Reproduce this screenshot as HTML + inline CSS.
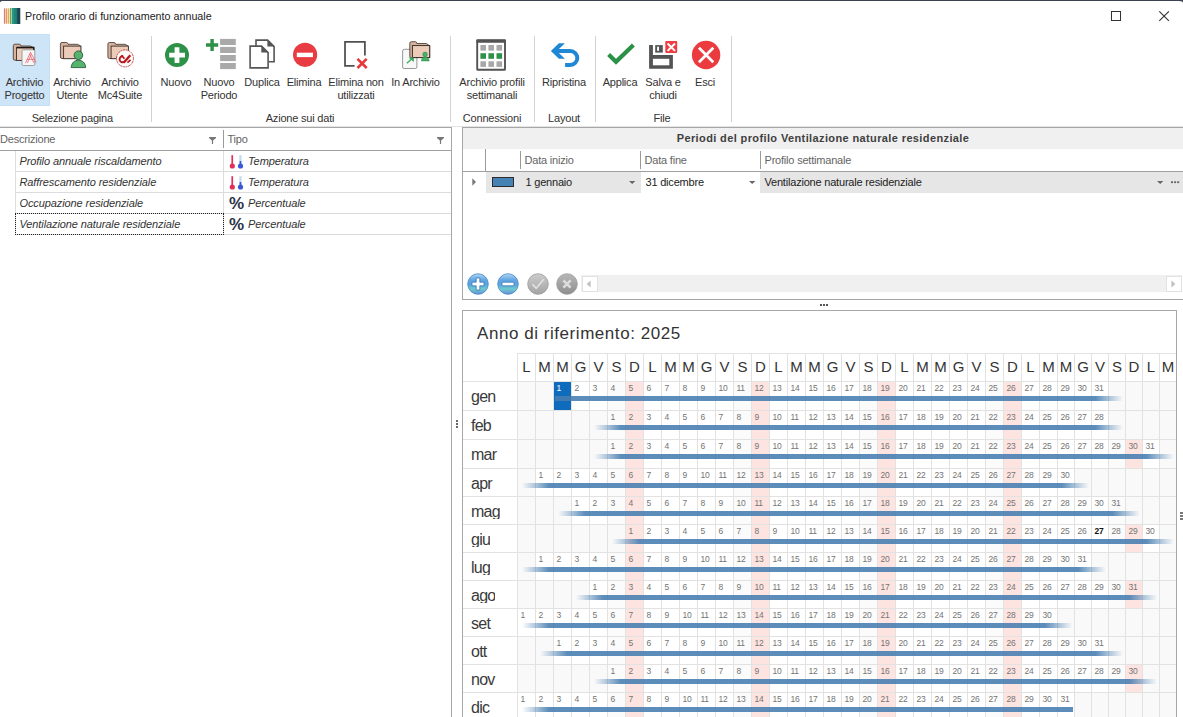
<!DOCTYPE html><html><head><meta charset="utf-8"><title>Profilo orario di funzionamento annuale</title><style>
html,body{margin:0;padding:0;}
body{width:1183px;height:717px;overflow:hidden;background:#fff;position:relative;
 font-family:"Liberation Sans",sans-serif;font-size:11px;letter-spacing:-0.2px;color:#333;}
.a{position:absolute;}
.t{position:absolute;white-space:nowrap;line-height:13px;}
.c{position:absolute;white-space:nowrap;line-height:13px;text-align:center;}
.hl{position:absolute;height:1px;}
.vl{position:absolute;width:1px;}
.it{font-style:italic;letter-spacing:-0.1px;}
.hd{color:#646464;}
.d{position:absolute;font-size:8.5px;line-height:8px;letter-spacing:-0.35px;color:#747474;white-space:nowrap;}
.m{position:absolute;font-size:16px;line-height:18px;letter-spacing:-0.75px;color:#3a3a3a;white-space:nowrap;left:471px;}
.w{position:absolute;font-size:15px;line-height:16px;letter-spacing:0;color:#333;text-align:center;top:358.5px;}
</style></head><body>
<div class="a" style="left:0;top:0;width:1183px;height:1px;background:#3c4250"></div>
<svg class="a" style="left:1179px;top:0" width="4" height="4" viewBox="0 0 4 4"><path d="M0 0H4V3.2C4 1.8 2.8 1 0 1Z" fill="#3c4250"/></svg><svg class="a" style="left:0;top:0" width="3" height="3" viewBox="0 0 3 3"><path d="M0 0H3V1C1.6 1 0.6 1.4 0 2.4Z" fill="#3c4250"/></svg>
<svg class="a" style="left:0;top:0" width="30" height="30" viewBox="0 0 30 30"><rect x="12.2" y="8" width="7.8" height="16" fill="#1f7a74"/><rect x="3.9" y="8.4" width="1.4" height="15.3" fill="#e07a62"/><rect x="5.9" y="8.4" width="1.4" height="15.3" fill="#e8955c"/><rect x="7.9" y="8.4" width="1.4" height="15.3" fill="#dcb250"/><rect x="9.9" y="8" width="1.2" height="16" fill="#6ea462"/><rect x="11.2" y="8" width="0.8" height="16" fill="#a4c487"/><rect x="12.2" y="8" width="2.3" height="16" fill="#229a84"/><rect x="14.2" y="8" width="2.1" height="16" fill="#1f8478"/><rect x="16" y="8" width="1.5" height="16" fill="#217a74"/><rect x="17.2" y="8" width="3.0999999999999996" height="16" fill="#1f4652"/></svg>
<div class="t" style="left:24.6px;top:9.6px;color:#222;font-size:11.5px;letter-spacing:0;transform:scaleX(0.933);transform-origin:0 0">Profilo orario di funzionamento annuale</div>
<svg class="a" style="left:1100px;top:0" width="83" height="32" viewBox="1100 0 83 32"><rect x="1111.5" y="11.5" width="9" height="9" fill="none" stroke="#333" stroke-width="1"/><path d="M1159.3 11.3L1168.9 20.9M1168.9 11.3L1159.3 20.9" stroke="#333" stroke-width="1.1" fill="none"/></svg>
<div class="a" style="left:-1px;top:34px;width:49px;height:70px;background:#cee4f7;border:1px solid #c5e0f4"></div>
<div class="vl" style="left:151px;top:36px;height:86px;background:#d2d2d2"></div>
<div class="vl" style="left:450px;top:36px;height:86px;background:#d2d2d2"></div>
<div class="vl" style="left:534px;top:36px;height:86px;background:#d2d2d2"></div>
<div class="vl" style="left:595px;top:36px;height:86px;background:#d2d2d2"></div>
<div class="vl" style="left:731px;top:36px;height:86px;background:#d2d2d2"></div>
<div class="c" style="left:-25.5px;width:100px;top:76px">Archivio</div>
<div class="c" style="left:-25.5px;width:100px;top:89px">Progetto</div>
<div class="c" style="left:22px;width:100px;top:76px">Archivio</div>
<div class="c" style="left:22px;width:100px;top:89px">Utente</div>
<div class="c" style="left:70px;width:100px;top:76px">Archivio</div>
<div class="c" style="left:70px;width:100px;top:89px">Mc4Suite</div>
<div class="c" style="left:126px;width:100px;top:76px">Nuovo</div>
<div class="c" style="left:169px;width:100px;top:76px">Nuovo</div>
<div class="c" style="left:169px;width:100px;top:89px">Periodo</div>
<div class="c" style="left:212px;width:100px;top:76px">Duplica</div>
<div class="c" style="left:254px;width:100px;top:76px">Elimina</div>
<div class="c" style="left:306px;width:100px;top:76px">Elimina non</div>
<div class="c" style="left:306px;width:100px;top:89px">utilizzati</div>
<div class="c" style="left:365.5px;width:100px;top:76px">In Archivio</div>
<div class="c" style="left:442px;width:100px;top:76px">Archivio profili</div>
<div class="c" style="left:442px;width:100px;top:89px">settimanali</div>
<div class="c" style="left:514px;width:100px;top:76px">Ripristina</div>
<div class="c" style="left:570px;width:100px;top:76px">Applica</div>
<div class="c" style="left:613px;width:100px;top:76px">Salva e</div>
<div class="c" style="left:613px;width:100px;top:89px">chiudi</div>
<div class="c" style="left:655px;width:100px;top:76px">Esci</div>
<div class="c" style="left:12.299999999999997px;width:120px;top:112px">Selezione pagina</div>
<div class="c" style="left:240px;width:120px;top:112px">Azione sui dati</div>
<div class="c" style="left:432px;width:120px;top:112px">Connessioni</div>
<div class="c" style="left:504px;width:120px;top:112px">Layout</div>
<div class="c" style="left:602px;width:120px;top:112px">File</div>
<svg class="a" style="left:0;top:32px" width="760" height="95" viewBox="0 32 760 95"><path d="M13.3 45.800000000000004Q13.3 44.2 14.9 44.2H19.3Q20.700000000000003 44.2 21.1 46.0H30.5L33.6 47.800000000000004V60.2H14.9Q13.3 60.2 13.3 58.800000000000004Z" fill="#d7b29c" stroke="#3a302c" stroke-width="0.8"/><rect x="16.5" y="47.800000000000004" width="17.3" height="12.6" fill="#ecccb8" stroke="#3a302c" stroke-width="0.9"/><rect x="22" y="49.8" width="12.8" height="15.7" rx="1.3" fill="#f6f6f6" stroke="#8a8a8a" stroke-width="0.8"/><path d="M30.5 52.4L25.6 62.8M30.5 52.4L36 62.2M31.2 54.4L27.6 62.6M29.8 54.4L33.8 62.6M27.2 59.4H33.8" stroke="#ec5a6a" stroke-width="0.75" fill="none" stroke-linecap="round"/><path d="M16.5 47.5H33.8V50" stroke="#1c1614" stroke-width="1.3" fill="none"/><path d="M60.4 44.1Q60.4 42.5 62.0 42.5H66.4Q67.8 42.5 68.2 44.3H77.6L80.7 46.1V58.5H62.0Q60.4 58.5 60.4 57.1Z" fill="#d7b29c" stroke="#3a302c" stroke-width="0.8"/><rect x="63.6" y="46.1" width="17.3" height="12.6" fill="#ecccb8" stroke="#3a302c" stroke-width="0.9"/><path d="M71.2 67.6C71.6 62.5 74.5 60.3 78.4 60.3C82.3 60.3 85.3 62.5 85.7 67.6Z" fill="#55b36e" stroke="#1f4d2e" stroke-width="0.8"/><circle cx="78.4" cy="55.2" r="4.3" fill="#55b36e" stroke="#1f4d2e" stroke-width="0.8"/><path d="M107.9 44.1Q107.9 42.5 109.5 42.5H113.9Q115.30000000000001 42.5 115.7 44.3H125.10000000000001L128.20000000000002 46.1V58.5H109.5Q107.9 58.5 107.9 57.1Z" fill="#d7b29c" stroke="#3a302c" stroke-width="0.8"/><rect x="111.10000000000001" y="46.1" width="17.3" height="12.6" fill="#ecccb8" stroke="#3a302c" stroke-width="0.9"/><circle cx="125" cy="58.4" r="8.5" fill="#fbfbfb" stroke="#b22a2a" stroke-width="0.8" stroke-dasharray="2 0.7"/><path d="M123.1 56.3A3 3 0 1 0 124.2 61.8" fill="none" stroke="#b8161a" stroke-width="1.9"/><path d="M123.6 62.8L130.3 55.3" fill="none" stroke="#b8161a" stroke-width="2.3"/><path d="M121.6 55.2L124.4 58.8" fill="none" stroke="#b8161a" stroke-width="1.7"/><path d="M127.4 62.6L130.6 59.8" fill="none" stroke="#b8161a" stroke-width="1.7"/><circle cx="177" cy="55.1" r="12" fill="#2e9148"/><path d="M174.6 47.2H179.4V52.7H185V57.5H179.4V63H174.6V57.5H169.2V52.7H174.6Z" fill="#fff"/><path d="M210.4 39H213.8V43.3H218.2V46.7H213.8V51H210.4V46.7H206V43.3H210.4Z" fill="#2e9148"/><rect x="220.1" y="38.9" width="15.7" height="6.1" fill="#a9a9a9"/><rect x="220.1" y="46.9" width="15.7" height="6.1" fill="#a9a9a9"/><rect x="220.1" y="55.0" width="15.7" height="6.1" fill="#a9a9a9"/><rect x="220.1" y="63.0" width="15.7" height="6.1" fill="#a9a9a9"/><path d="M256 46V40.1H267.6L274.1 46.6V61.8H268.9" fill="#fff" stroke="#555" stroke-width="1.6"/><path d="M267.4 39.8V46.5H274.4Z" fill="#555"/><path d="M250.1 46.1H261.5L268.1 52.7V67.9H250.1Z" fill="#fff" stroke="#555" stroke-width="1.6"/><path d="M261.3 45.8V52.6H268.4Z" fill="#555"/><circle cx="305.1" cy="54.8" r="12.1" fill="#e83c42"/><rect x="296.8" y="52.7" width="16.2" height="4.4" fill="#fff"/><path d="M354.6 65.8H345V41.9H364.9V55.4" fill="none" stroke="#505050" stroke-width="1.75"/><path d="M357.5 58.8L366.7 68M366.7 58.8L357.5 68" stroke="#e8363a" stroke-width="2.6" fill="none"/><path d="M402.6 51Q402.6 49.3 404.3 49.3H415.4Q416.9 49.3 416.9 50.8V67Q416.9 68.5 415.4 68.5H404.1Q402.6 68.5 402.6 67Z" fill="#f8f8f8" stroke="#8c8c8c" stroke-width="0.9"/><path d="M409.8 43.4Q409.8 41.7 411.4 41.7H415.4Q416.6 41.7 416.9 43.5H426.2L429.7 45.8V57.6H411.4Q409.8 57.6 409.8 56.2Z" fill="#d7b29c" stroke="#3a302c" stroke-width="0.8"/><rect x="412.4" y="45.6" width="17.3" height="12" fill="#ecccb8" stroke="#2a2320" stroke-width="0.9"/><circle cx="425.05" cy="54.4" r="2.3" fill="#45b468" stroke="#2f7a45" stroke-width="0.5"/><path d="M421.4 60.9C421.6 58 423 56.9 425.05 56.9C427.1 56.9 428.9 58 429.2 60.9Z" fill="#45b468" stroke="#2f7a45" stroke-width="0.5"/><path d="M406.8 63.2L412.4 58.4" stroke="#45b468" stroke-width="1.5" fill="none"/><path d="M408.4 57.4H413.9V62L408.4 57.4Z" fill="#3fa75f"/><rect x="477.2" y="40.6" width="27.8" height="29.2" rx="0.6" fill="#fff" stroke="#535353" stroke-width="1.9"/><rect x="476.3" y="39.2" width="29.6" height="3.6" rx="0.8" fill="#535353"/><rect x="480.4" y="45" width="5.6" height="5.6" fill="#a8a8a8"/><rect x="488.4" y="45" width="5.6" height="5.6" fill="#a8a8a8"/><rect x="496.5" y="45" width="5.6" height="5.6" fill="#a8a8a8"/><rect x="480.4" y="53.2" width="5.6" height="5.6" fill="#2e9148"/><rect x="488.4" y="53.2" width="5.6" height="5.6" fill="#2e9148"/><rect x="496.5" y="53.2" width="5.6" height="5.6" fill="#2e9148"/><rect x="480.4" y="61.3" width="5.6" height="5.6" fill="#a8a8a8"/><rect x="488.4" y="61.3" width="5.6" height="5.6" fill="#a8a8a8"/><rect x="496.5" y="61.3" width="5.6" height="5.6" fill="#a8a8a8"/><path d="M558.9 43.2H564.9L556.9 51L564.9 58.8H558.9L550.9 51Z" fill="#1e88d4"/><path d="M556.5 51H570.3A7 7 0 0 1 570.3 65H565.1" fill="none" stroke="#1e88d4" stroke-width="3.9"/><path d="M608.6 54.6L616 61.8L633.4 44.9" fill="none" stroke="#2a9146" stroke-width="4.2"/><path d="M649.1 45.1H652.9V55H672.9V68.7H649.1Z" fill="#545454"/><rect x="652.9" y="58.8" width="16.4" height="6.5" fill="#fff"/><rect x="655.2" y="45.1" width="7.6" height="7.5" fill="#545454"/><rect x="657.1" y="46.7" width="1.9" height="4.1" fill="#fff"/><rect x="665.3" y="40.9" width="11.9" height="12" rx="0.8" fill="#ee3e42"/><path d="M667.6 43.5L675 50.9M675 43.5L667.6 50.9" stroke="#fff" stroke-width="1.9" fill="none"/><circle cx="706.1" cy="55" r="14.2" fill="#ec3b3f"/><path d="M698.9 47.8L713.3 62.2M713.3 47.8L698.9 62.2" stroke="#fff" stroke-width="2.7" fill="none"/></svg>
<div class="hl" style="left:0;top:126px;width:1183px;background:#e4e4e4"></div>
<div class="hl" style="left:0;top:127px;width:452px;background:#a6a6a6"></div>
<div class="hl" style="left:462px;top:127px;width:721px;background:#a6a6a6"></div>
<div class="vl" style="left:451px;top:127px;height:590px;background:#a6a6a6"></div>
<div class="t hd" style="left:0px;top:133px">Descrizione</div>
<div class="t hd" style="left:227.5px;top:133px">Tipo</div>
<div class="vl" style="left:223px;top:130px;height:18px;background:#9a9a9a"></div>
<svg class="a" style="left:209px;top:136.6px" width="7" height="7" viewBox="0 0 7 7"><path d="M0 0H7V1L4.1 3.6V7H2.9V3.6L0 1Z" fill="#777"/></svg>
<svg class="a" style="left:437px;top:136.6px" width="7" height="7" viewBox="0 0 7 7"><path d="M0 0H7V1L4.1 3.6V7H2.9V3.6L0 1Z" fill="#777"/></svg>
<div class="hl" style="left:0;top:150px;width:451px;background:#a0a0a0"></div>
<div class="hl" style="left:15px;top:171px;width:436px;background:#dcdcdc"></div>
<div class="t it" style="left:19.5px;top:155px">Profilo annuale riscaldamento</div>
<div class="t it" style="left:248px;top:155px">Temperatura</div>
<svg class="a" style="left:228.5px;top:153.5px" width="17" height="16" viewBox="0 0 17 16"><rect x="2.4" y="1.2" width="1.7" height="10" fill="#e03058"/><circle cx="3.3" cy="12" r="2.6" fill="#e03058"/><rect x="10.3" y="1.2" width="2.3" height="10" fill="#c4daee"/><rect x="10.6" y="7" width="1.7" height="5" fill="#3a58d8"/><circle cx="11.5" cy="12" r="2.6" fill="#3a58d8"/></svg>
<div class="hl" style="left:15px;top:192px;width:436px;background:#dcdcdc"></div>
<div class="t it" style="left:19.5px;top:176px">Raffrescamento residenziale</div>
<div class="t it" style="left:248px;top:176px">Temperatura</div>
<svg class="a" style="left:228.5px;top:174.5px" width="17" height="16" viewBox="0 0 17 16"><rect x="2.4" y="1.2" width="1.7" height="10" fill="#e03058"/><circle cx="3.3" cy="12" r="2.6" fill="#e03058"/><rect x="10.3" y="1.2" width="2.3" height="10" fill="#c4daee"/><rect x="10.6" y="7" width="1.7" height="5" fill="#3a58d8"/><circle cx="11.5" cy="12" r="2.6" fill="#3a58d8"/></svg>
<div class="hl" style="left:15px;top:213px;width:436px;background:#dcdcdc"></div>
<div class="t it" style="left:19.5px;top:197px">Occupazione residenziale</div>
<div class="t it" style="left:248px;top:197px">Percentuale</div>
<div class="a" style="left:229px;top:194px;font-size:17px;line-height:19px;font-weight:bold;color:#2c3348;letter-spacing:0">%</div>
<div class="hl" style="left:15px;top:234px;width:436px;background:#dcdcdc"></div>
<div class="t it" style="left:19.5px;top:218px">Ventilazione naturale residenziale</div>
<div class="t it" style="left:248px;top:218px">Percentuale</div>
<div class="a" style="left:229px;top:215px;font-size:17px;line-height:19px;font-weight:bold;color:#2c3348;letter-spacing:0">%</div>
<div class="vl" style="left:15px;top:151px;height:84px;background:#dcdcdc"></div>
<div class="vl" style="left:223px;top:151px;height:84px;background:#dcdcdc"></div>
<div class="a" style="left:15px;top:213px;width:207px;height:20px;border:1px dotted #222"></div>
<div class="vl" style="left:462px;top:127px;height:173px;background:#a6a6a6"></div>
<div class="hl" style="left:462px;top:299px;width:721px;background:#a6a6a6"></div>
<div class="a" style="left:463px;top:128px;width:720px;height:21px;background:#f0f0f0"></div>
<div class="c" style="left:463px;width:720px;top:132px;font-weight:bold;letter-spacing:0.38px;color:#404040">Periodi del profilo Ventilazione naturale residenziale</div>
<div class="hl" style="left:463px;top:171px;width:720px;background:#a0a0a0"></div>
<div class="vl" style="left:485px;top:149px;height:22px;background:#9a9a9a"></div>
<div class="vl" style="left:520px;top:151px;height:18px;background:#9a9a9a"></div>
<div class="vl" style="left:640px;top:151px;height:18px;background:#9a9a9a"></div>
<div class="vl" style="left:760px;top:151px;height:18px;background:#9a9a9a"></div>
<div class="t hd" style="left:524.5px;top:154px">Data inizio</div>
<div class="t hd" style="left:644.5px;top:154px">Data fine</div>
<div class="t hd" style="left:764.5px;top:154px">Profilo settimanale</div>
<div class="a" style="left:486px;top:172px;width:697px;height:21px;background:#e6e6e6"></div>
<div class="a" style="left:641px;top:172px;width:119px;height:21px;background:#fff"></div>
<svg class="a" style="left:472px;top:178px" width="5" height="8" viewBox="0 0 5 8"><path d="M0.3 0.3L4 4L0.3 7.7Z" fill="#777"/></svg>
<div class="a" style="left:492px;top:177px;width:20px;height:8px;background:#4682b4;border:1px solid #2b2b2b"></div>
<div class="t" style="left:525.5px;top:175.5px;color:#222">1 gennaio</div>
<div class="t" style="left:645.5px;top:175.5px;color:#222">31 dicembre</div>
<div class="t" style="left:764.5px;top:175.5px;color:#222">Ventilazione naturale residenziale</div>
<svg class="a" style="left:629px;top:181px" width="7" height="4" viewBox="0 0 7 4"><path d="M0 0H6.4L3.2 3Z" fill="#666"/></svg>
<svg class="a" style="left:748.5px;top:181px" width="7" height="4" viewBox="0 0 7 4"><path d="M0 0H6.4L3.2 3Z" fill="#666"/></svg>
<svg class="a" style="left:1157px;top:181px" width="7" height="4" viewBox="0 0 7 4"><path d="M0 0H6.4L3.2 3Z" fill="#666"/></svg>
<svg class="a" style="left:1171px;top:181px" width="9" height="3" viewBox="0 0 9 3"><rect x="0" y="0.3" width="2" height="1.8" fill="#666"/><rect x="3.1" y="0.3" width="2" height="1.8" fill="#666"/><rect x="6.2" y="0.3" width="2" height="1.8" fill="#666"/></svg>
<svg class="a" style="left:466.8px;top:273px" width="22" height="22" viewBox="0 0 22 22"><defs><linearGradient id="gplus" x1="0" y1="0" x2="0" y2="1"><stop offset="0" stop-color="#b0d8f4"/><stop offset="0.3" stop-color="#62a6e2"/><stop offset="0.52" stop-color="#5aa4dc"/><stop offset="0.74" stop-color="#6ccace"/><stop offset="1" stop-color="#6a8ed8"/></linearGradient></defs><circle cx="11" cy="11" r="10.3" fill="url(#gplus)" stroke="#4a88c8" stroke-width="0.8"/><path d="M9.2 5H12.8V9.2H17V12.8H12.8V17H9.2V12.8H5V9.2H9.2Z" fill="#fff" stroke="#2f6cb0" stroke-width="0.7"/></svg>
<svg class="a" style="left:497px;top:273px" width="22" height="22" viewBox="0 0 22 22"><defs><linearGradient id="gminus" x1="0" y1="0" x2="0" y2="1"><stop offset="0" stop-color="#b0d8f4"/><stop offset="0.3" stop-color="#62a6e2"/><stop offset="0.52" stop-color="#5aa4dc"/><stop offset="0.74" stop-color="#6ccace"/><stop offset="1" stop-color="#6a8ed8"/></linearGradient></defs><circle cx="11" cy="11" r="10.3" fill="url(#gminus)" stroke="#4a88c8" stroke-width="0.8"/><rect x="5" y="9.2" width="12" height="3.6" rx="1" fill="#fff" stroke="#2f6cb0" stroke-width="0.7"/></svg>
<svg class="a" style="left:527px;top:273px" width="22" height="22" viewBox="0 0 22 22"><defs><linearGradient id="gcheck" x1="0" y1="0" x2="0" y2="1"><stop offset="0" stop-color="#cccccc"/><stop offset="1" stop-color="#a4a4a4"/></linearGradient></defs><circle cx="11" cy="11" r="10.3" fill="url(#gcheck)" stroke="#9a9a9a" stroke-width="0.8"/><path d="M5.4 11.4L9.2 15.2L16.8 6.2" fill="none" stroke="#e0e0e0" stroke-width="1.7"/></svg>
<svg class="a" style="left:556px;top:273px" width="22" height="22" viewBox="0 0 22 22"><defs><linearGradient id="gx" x1="0" y1="0" x2="0" y2="1"><stop offset="0" stop-color="#b8b8b8"/><stop offset="1" stop-color="#8e8e8e"/></linearGradient></defs><circle cx="11" cy="11" r="10.3" fill="url(#gx)" stroke="#9a9a9a" stroke-width="0.8"/><path d="M7.4 7.4L14.6 14.6M14.6 7.4L7.4 14.6" fill="none" stroke="#dcdcdc" stroke-width="2.7"/></svg>
<div class="a" style="left:581px;top:275px;width:601px;height:17px;background:#f0f0f0"></div>
<div class="a" style="left:582px;top:276px;width:14px;height:14px;background:#fff;border:1px solid #e2e2e2"></div>
<div class="a" style="left:1166px;top:276px;width:14px;height:14px;background:#fff;border:1px solid #e2e2e2"></div>
<svg class="a" style="left:586px;top:280px" width="5" height="8" viewBox="0 0 5 8"><path d="M4.6 0.5V7.5L0.6 4Z" fill="#c0c0c0"/></svg>
<svg class="a" style="left:1171px;top:280px" width="5" height="8" viewBox="0 0 5 8"><path d="M0.4 0.5V7.5L4.4 4Z" fill="#c0c0c0"/></svg>
<svg class="a" style="left:820px;top:304px" width="9" height="3" viewBox="0 0 9 3"><rect x="0" y="0" width="2" height="2" fill="#555"/><rect x="3" y="0" width="2" height="2" fill="#555"/><rect x="6" y="0" width="2" height="2" fill="#555"/></svg>
<svg class="a" style="left:456px;top:420px" width="3" height="9" viewBox="0 0 3 9"><rect x="0" y="0" width="2" height="2" fill="#6a6a6a"/><rect x="0" y="3" width="2" height="2" fill="#6a6a6a"/><rect x="0" y="6" width="2" height="2" fill="#6a6a6a"/></svg>
<svg class="a" style="left:1180px;top:512px" width="3" height="9" viewBox="0 0 3 9"><rect x="0" y="0" width="3" height="2" fill="#777"/><rect x="0" y="3" width="3" height="2" fill="#777"/><rect x="0" y="6" width="3" height="2" fill="#777"/></svg>
<div class="hl" style="left:462px;top:310px;width:715px;background:#a6a6a6"></div>
<div class="vl" style="left:462px;top:310px;height:407px;background:#a6a6a6"></div>
<div class="vl" style="left:1176px;top:310px;height:407px;background:#a6a6a6"></div>
<div class="t" style="left:477px;top:323.5px;font-size:17px;line-height:20px;letter-spacing:0.55px;color:#333">Anno di riferimento: 2025</div>
<div class="a" style="left:518px;top:382px;width:17px;height:28px;background:#f9f9f9"></div>
<div class="a" style="left:536px;top:382px;width:17px;height:28px;background:#f9f9f9"></div>
<div class="a" style="left:554px;top:382px;width:17px;height:28px;background:#0f6cbd"></div>
<div class="a" style="left:608px;top:382px;width:17px;height:28px;background:#fbfbfb"></div>
<div class="a" style="left:626px;top:382px;width:17px;height:28px;background:#fee4e1"></div>
<div class="a" style="left:734px;top:382px;width:17px;height:28px;background:#fbfbfb"></div>
<div class="a" style="left:752px;top:382px;width:17px;height:28px;background:#fee4e1"></div>
<div class="a" style="left:860px;top:382px;width:17px;height:28px;background:#fbfbfb"></div>
<div class="a" style="left:878px;top:382px;width:17px;height:28px;background:#fee4e1"></div>
<div class="a" style="left:986px;top:382px;width:17px;height:28px;background:#fbfbfb"></div>
<div class="a" style="left:1004px;top:382px;width:17px;height:28px;background:#fee4e1"></div>
<div class="a" style="left:1109px;top:382px;width:16px;height:28px;background:#f9f9f9"></div>
<div class="a" style="left:1126px;top:382px;width:16px;height:28px;background:#f9f9f9"></div>
<div class="a" style="left:1143px;top:382px;width:16px;height:28px;background:#f9f9f9"></div>
<div class="a" style="left:1160px;top:382px;width:16px;height:28px;background:#f9f9f9"></div>
<div class="a" style="left:518px;top:411px;width:17px;height:28px;background:#f9f9f9"></div>
<div class="a" style="left:536px;top:411px;width:17px;height:28px;background:#f9f9f9"></div>
<div class="a" style="left:554px;top:411px;width:17px;height:28px;background:#f9f9f9"></div>
<div class="a" style="left:572px;top:411px;width:17px;height:28px;background:#f9f9f9"></div>
<div class="a" style="left:590px;top:411px;width:17px;height:28px;background:#f9f9f9"></div>
<div class="a" style="left:608px;top:411px;width:17px;height:28px;background:#fbfbfb"></div>
<div class="a" style="left:626px;top:411px;width:17px;height:28px;background:#fee4e1"></div>
<div class="a" style="left:734px;top:411px;width:17px;height:28px;background:#fbfbfb"></div>
<div class="a" style="left:752px;top:411px;width:17px;height:28px;background:#fee4e1"></div>
<div class="a" style="left:860px;top:411px;width:17px;height:28px;background:#fbfbfb"></div>
<div class="a" style="left:878px;top:411px;width:17px;height:28px;background:#fee4e1"></div>
<div class="a" style="left:986px;top:411px;width:17px;height:28px;background:#fbfbfb"></div>
<div class="a" style="left:1004px;top:411px;width:17px;height:28px;background:#fee4e1"></div>
<div class="a" style="left:1109px;top:411px;width:16px;height:28px;background:#f9f9f9"></div>
<div class="a" style="left:1126px;top:411px;width:16px;height:28px;background:#f9f9f9"></div>
<div class="a" style="left:1143px;top:411px;width:16px;height:28px;background:#f9f9f9"></div>
<div class="a" style="left:1160px;top:411px;width:16px;height:28px;background:#f9f9f9"></div>
<div class="a" style="left:518px;top:440px;width:17px;height:28px;background:#f9f9f9"></div>
<div class="a" style="left:536px;top:440px;width:17px;height:28px;background:#f9f9f9"></div>
<div class="a" style="left:554px;top:440px;width:17px;height:28px;background:#f9f9f9"></div>
<div class="a" style="left:572px;top:440px;width:17px;height:28px;background:#f9f9f9"></div>
<div class="a" style="left:590px;top:440px;width:17px;height:28px;background:#f9f9f9"></div>
<div class="a" style="left:608px;top:440px;width:17px;height:28px;background:#fbfbfb"></div>
<div class="a" style="left:626px;top:440px;width:17px;height:28px;background:#fee4e1"></div>
<div class="a" style="left:734px;top:440px;width:17px;height:28px;background:#fbfbfb"></div>
<div class="a" style="left:752px;top:440px;width:17px;height:28px;background:#fee4e1"></div>
<div class="a" style="left:860px;top:440px;width:17px;height:28px;background:#fbfbfb"></div>
<div class="a" style="left:878px;top:440px;width:17px;height:28px;background:#fee4e1"></div>
<div class="a" style="left:986px;top:440px;width:17px;height:28px;background:#fbfbfb"></div>
<div class="a" style="left:1004px;top:440px;width:17px;height:28px;background:#fee4e1"></div>
<div class="a" style="left:1109px;top:440px;width:16px;height:28px;background:#fbfbfb"></div>
<div class="a" style="left:1126px;top:440px;width:16px;height:28px;background:#fee4e1"></div>
<div class="a" style="left:1160px;top:440px;width:16px;height:28px;background:#f9f9f9"></div>
<div class="a" style="left:518px;top:469px;width:17px;height:27px;background:#f9f9f9"></div>
<div class="a" style="left:608px;top:469px;width:17px;height:27px;background:#fbfbfb"></div>
<div class="a" style="left:626px;top:469px;width:17px;height:27px;background:#fee4e1"></div>
<div class="a" style="left:734px;top:469px;width:17px;height:27px;background:#fbfbfb"></div>
<div class="a" style="left:752px;top:469px;width:17px;height:27px;background:#fee4e1"></div>
<div class="a" style="left:860px;top:469px;width:17px;height:27px;background:#fbfbfb"></div>
<div class="a" style="left:878px;top:469px;width:17px;height:27px;background:#fee4e1"></div>
<div class="a" style="left:986px;top:469px;width:17px;height:27px;background:#fbfbfb"></div>
<div class="a" style="left:1004px;top:469px;width:17px;height:27px;background:#fee4e1"></div>
<div class="a" style="left:1075px;top:469px;width:16px;height:27px;background:#f9f9f9"></div>
<div class="a" style="left:1092px;top:469px;width:16px;height:27px;background:#f9f9f9"></div>
<div class="a" style="left:1109px;top:469px;width:16px;height:27px;background:#f9f9f9"></div>
<div class="a" style="left:1126px;top:469px;width:16px;height:27px;background:#f9f9f9"></div>
<div class="a" style="left:1143px;top:469px;width:16px;height:27px;background:#f9f9f9"></div>
<div class="a" style="left:1160px;top:469px;width:16px;height:27px;background:#f9f9f9"></div>
<div class="a" style="left:518px;top:497px;width:17px;height:27px;background:#f9f9f9"></div>
<div class="a" style="left:536px;top:497px;width:17px;height:27px;background:#f9f9f9"></div>
<div class="a" style="left:554px;top:497px;width:17px;height:27px;background:#f9f9f9"></div>
<div class="a" style="left:608px;top:497px;width:17px;height:27px;background:#fbfbfb"></div>
<div class="a" style="left:626px;top:497px;width:17px;height:27px;background:#fee4e1"></div>
<div class="a" style="left:734px;top:497px;width:17px;height:27px;background:#fbfbfb"></div>
<div class="a" style="left:752px;top:497px;width:17px;height:27px;background:#fee4e1"></div>
<div class="a" style="left:860px;top:497px;width:17px;height:27px;background:#fbfbfb"></div>
<div class="a" style="left:878px;top:497px;width:17px;height:27px;background:#fee4e1"></div>
<div class="a" style="left:986px;top:497px;width:17px;height:27px;background:#fbfbfb"></div>
<div class="a" style="left:1004px;top:497px;width:17px;height:27px;background:#fee4e1"></div>
<div class="a" style="left:1109px;top:497px;width:16px;height:27px;background:#fbfbfb"></div>
<div class="a" style="left:1126px;top:497px;width:16px;height:27px;background:#f9f9f9"></div>
<div class="a" style="left:1143px;top:497px;width:16px;height:27px;background:#f9f9f9"></div>
<div class="a" style="left:1160px;top:497px;width:16px;height:27px;background:#f9f9f9"></div>
<div class="a" style="left:518px;top:525px;width:17px;height:27px;background:#f9f9f9"></div>
<div class="a" style="left:536px;top:525px;width:17px;height:27px;background:#f9f9f9"></div>
<div class="a" style="left:554px;top:525px;width:17px;height:27px;background:#f9f9f9"></div>
<div class="a" style="left:572px;top:525px;width:17px;height:27px;background:#f9f9f9"></div>
<div class="a" style="left:590px;top:525px;width:17px;height:27px;background:#f9f9f9"></div>
<div class="a" style="left:608px;top:525px;width:17px;height:27px;background:#f9f9f9"></div>
<div class="a" style="left:626px;top:525px;width:17px;height:27px;background:#fee4e1"></div>
<div class="a" style="left:734px;top:525px;width:17px;height:27px;background:#fbfbfb"></div>
<div class="a" style="left:752px;top:525px;width:17px;height:27px;background:#fee4e1"></div>
<div class="a" style="left:860px;top:525px;width:17px;height:27px;background:#fbfbfb"></div>
<div class="a" style="left:878px;top:525px;width:17px;height:27px;background:#fee4e1"></div>
<div class="a" style="left:986px;top:525px;width:17px;height:27px;background:#fbfbfb"></div>
<div class="a" style="left:1004px;top:525px;width:17px;height:27px;background:#fee4e1"></div>
<div class="a" style="left:1109px;top:525px;width:16px;height:27px;background:#fbfbfb"></div>
<div class="a" style="left:1126px;top:525px;width:16px;height:27px;background:#fee4e1"></div>
<div class="a" style="left:1160px;top:525px;width:16px;height:27px;background:#f9f9f9"></div>
<div class="a" style="left:518px;top:553px;width:17px;height:27px;background:#f9f9f9"></div>
<div class="a" style="left:608px;top:553px;width:17px;height:27px;background:#fbfbfb"></div>
<div class="a" style="left:626px;top:553px;width:17px;height:27px;background:#fee4e1"></div>
<div class="a" style="left:734px;top:553px;width:17px;height:27px;background:#fbfbfb"></div>
<div class="a" style="left:752px;top:553px;width:17px;height:27px;background:#fee4e1"></div>
<div class="a" style="left:860px;top:553px;width:17px;height:27px;background:#fbfbfb"></div>
<div class="a" style="left:878px;top:553px;width:17px;height:27px;background:#fee4e1"></div>
<div class="a" style="left:986px;top:553px;width:17px;height:27px;background:#fbfbfb"></div>
<div class="a" style="left:1004px;top:553px;width:17px;height:27px;background:#fee4e1"></div>
<div class="a" style="left:1092px;top:553px;width:16px;height:27px;background:#f9f9f9"></div>
<div class="a" style="left:1109px;top:553px;width:16px;height:27px;background:#f9f9f9"></div>
<div class="a" style="left:1126px;top:553px;width:16px;height:27px;background:#f9f9f9"></div>
<div class="a" style="left:1143px;top:553px;width:16px;height:27px;background:#f9f9f9"></div>
<div class="a" style="left:1160px;top:553px;width:16px;height:27px;background:#f9f9f9"></div>
<div class="a" style="left:518px;top:581px;width:17px;height:27px;background:#f9f9f9"></div>
<div class="a" style="left:536px;top:581px;width:17px;height:27px;background:#f9f9f9"></div>
<div class="a" style="left:554px;top:581px;width:17px;height:27px;background:#f9f9f9"></div>
<div class="a" style="left:572px;top:581px;width:17px;height:27px;background:#f9f9f9"></div>
<div class="a" style="left:608px;top:581px;width:17px;height:27px;background:#fbfbfb"></div>
<div class="a" style="left:626px;top:581px;width:17px;height:27px;background:#fee4e1"></div>
<div class="a" style="left:734px;top:581px;width:17px;height:27px;background:#fbfbfb"></div>
<div class="a" style="left:752px;top:581px;width:17px;height:27px;background:#fee4e1"></div>
<div class="a" style="left:860px;top:581px;width:17px;height:27px;background:#fbfbfb"></div>
<div class="a" style="left:878px;top:581px;width:17px;height:27px;background:#fee4e1"></div>
<div class="a" style="left:986px;top:581px;width:17px;height:27px;background:#fbfbfb"></div>
<div class="a" style="left:1004px;top:581px;width:17px;height:27px;background:#fee4e1"></div>
<div class="a" style="left:1109px;top:581px;width:16px;height:27px;background:#fbfbfb"></div>
<div class="a" style="left:1126px;top:581px;width:16px;height:27px;background:#fee4e1"></div>
<div class="a" style="left:1143px;top:581px;width:16px;height:27px;background:#f9f9f9"></div>
<div class="a" style="left:1160px;top:581px;width:16px;height:27px;background:#f9f9f9"></div>
<div class="a" style="left:608px;top:609px;width:17px;height:27px;background:#fbfbfb"></div>
<div class="a" style="left:626px;top:609px;width:17px;height:27px;background:#fee4e1"></div>
<div class="a" style="left:734px;top:609px;width:17px;height:27px;background:#fbfbfb"></div>
<div class="a" style="left:752px;top:609px;width:17px;height:27px;background:#fee4e1"></div>
<div class="a" style="left:860px;top:609px;width:17px;height:27px;background:#fbfbfb"></div>
<div class="a" style="left:878px;top:609px;width:17px;height:27px;background:#fee4e1"></div>
<div class="a" style="left:986px;top:609px;width:17px;height:27px;background:#fbfbfb"></div>
<div class="a" style="left:1004px;top:609px;width:17px;height:27px;background:#fee4e1"></div>
<div class="a" style="left:1058px;top:609px;width:16px;height:27px;background:#f9f9f9"></div>
<div class="a" style="left:1075px;top:609px;width:16px;height:27px;background:#f9f9f9"></div>
<div class="a" style="left:1092px;top:609px;width:16px;height:27px;background:#f9f9f9"></div>
<div class="a" style="left:1109px;top:609px;width:16px;height:27px;background:#f9f9f9"></div>
<div class="a" style="left:1126px;top:609px;width:16px;height:27px;background:#f9f9f9"></div>
<div class="a" style="left:1143px;top:609px;width:16px;height:27px;background:#f9f9f9"></div>
<div class="a" style="left:1160px;top:609px;width:16px;height:27px;background:#f9f9f9"></div>
<div class="a" style="left:518px;top:637px;width:17px;height:27px;background:#f9f9f9"></div>
<div class="a" style="left:536px;top:637px;width:17px;height:27px;background:#f9f9f9"></div>
<div class="a" style="left:608px;top:637px;width:17px;height:27px;background:#fbfbfb"></div>
<div class="a" style="left:626px;top:637px;width:17px;height:27px;background:#fee4e1"></div>
<div class="a" style="left:734px;top:637px;width:17px;height:27px;background:#fbfbfb"></div>
<div class="a" style="left:752px;top:637px;width:17px;height:27px;background:#fee4e1"></div>
<div class="a" style="left:860px;top:637px;width:17px;height:27px;background:#fbfbfb"></div>
<div class="a" style="left:878px;top:637px;width:17px;height:27px;background:#fee4e1"></div>
<div class="a" style="left:986px;top:637px;width:17px;height:27px;background:#fbfbfb"></div>
<div class="a" style="left:1004px;top:637px;width:17px;height:27px;background:#fee4e1"></div>
<div class="a" style="left:1109px;top:637px;width:16px;height:27px;background:#f9f9f9"></div>
<div class="a" style="left:1126px;top:637px;width:16px;height:27px;background:#f9f9f9"></div>
<div class="a" style="left:1143px;top:637px;width:16px;height:27px;background:#f9f9f9"></div>
<div class="a" style="left:1160px;top:637px;width:16px;height:27px;background:#f9f9f9"></div>
<div class="a" style="left:518px;top:665px;width:17px;height:27px;background:#f9f9f9"></div>
<div class="a" style="left:536px;top:665px;width:17px;height:27px;background:#f9f9f9"></div>
<div class="a" style="left:554px;top:665px;width:17px;height:27px;background:#f9f9f9"></div>
<div class="a" style="left:572px;top:665px;width:17px;height:27px;background:#f9f9f9"></div>
<div class="a" style="left:590px;top:665px;width:17px;height:27px;background:#f9f9f9"></div>
<div class="a" style="left:608px;top:665px;width:17px;height:27px;background:#fbfbfb"></div>
<div class="a" style="left:626px;top:665px;width:17px;height:27px;background:#fee4e1"></div>
<div class="a" style="left:734px;top:665px;width:17px;height:27px;background:#fbfbfb"></div>
<div class="a" style="left:752px;top:665px;width:17px;height:27px;background:#fee4e1"></div>
<div class="a" style="left:860px;top:665px;width:17px;height:27px;background:#fbfbfb"></div>
<div class="a" style="left:878px;top:665px;width:17px;height:27px;background:#fee4e1"></div>
<div class="a" style="left:986px;top:665px;width:17px;height:27px;background:#fbfbfb"></div>
<div class="a" style="left:1004px;top:665px;width:17px;height:27px;background:#fee4e1"></div>
<div class="a" style="left:1109px;top:665px;width:16px;height:27px;background:#fbfbfb"></div>
<div class="a" style="left:1126px;top:665px;width:16px;height:27px;background:#fee4e1"></div>
<div class="a" style="left:1143px;top:665px;width:16px;height:27px;background:#f9f9f9"></div>
<div class="a" style="left:1160px;top:665px;width:16px;height:27px;background:#f9f9f9"></div>
<div class="a" style="left:608px;top:693px;width:17px;height:27px;background:#fbfbfb"></div>
<div class="a" style="left:626px;top:693px;width:17px;height:27px;background:#fee4e1"></div>
<div class="a" style="left:734px;top:693px;width:17px;height:27px;background:#fbfbfb"></div>
<div class="a" style="left:752px;top:693px;width:17px;height:27px;background:#fee4e1"></div>
<div class="a" style="left:860px;top:693px;width:17px;height:27px;background:#fbfbfb"></div>
<div class="a" style="left:878px;top:693px;width:17px;height:27px;background:#fee4e1"></div>
<div class="a" style="left:986px;top:693px;width:17px;height:27px;background:#fbfbfb"></div>
<div class="a" style="left:1004px;top:693px;width:17px;height:27px;background:#fee4e1"></div>
<div class="a" style="left:1075px;top:693px;width:16px;height:27px;background:#f9f9f9"></div>
<div class="a" style="left:1092px;top:693px;width:16px;height:27px;background:#f9f9f9"></div>
<div class="a" style="left:1109px;top:693px;width:16px;height:27px;background:#f9f9f9"></div>
<div class="a" style="left:1126px;top:693px;width:16px;height:27px;background:#f9f9f9"></div>
<div class="a" style="left:1143px;top:693px;width:16px;height:27px;background:#f9f9f9"></div>
<div class="a" style="left:1160px;top:693px;width:16px;height:27px;background:#f9f9f9"></div>
<div class="hl" style="left:517px;top:353px;width:659px;background:#e2e2e2"></div>
<div class="hl" style="left:463px;top:381px;width:713px;background:#e2e2e2"></div>
<div class="hl" style="left:463px;top:410px;width:713px;background:#e2e2e2"></div>
<div class="hl" style="left:463px;top:439px;width:713px;background:#e2e2e2"></div>
<div class="hl" style="left:463px;top:468px;width:713px;background:#e2e2e2"></div>
<div class="hl" style="left:463px;top:496px;width:713px;background:#e2e2e2"></div>
<div class="hl" style="left:463px;top:524px;width:713px;background:#e2e2e2"></div>
<div class="hl" style="left:463px;top:552px;width:713px;background:#e2e2e2"></div>
<div class="hl" style="left:463px;top:580px;width:713px;background:#e2e2e2"></div>
<div class="hl" style="left:463px;top:608px;width:713px;background:#e2e2e2"></div>
<div class="hl" style="left:463px;top:636px;width:713px;background:#e2e2e2"></div>
<div class="hl" style="left:463px;top:664px;width:713px;background:#e2e2e2"></div>
<div class="hl" style="left:463px;top:692px;width:713px;background:#e2e2e2"></div>
<div class="vl" style="left:517px;top:353px;height:364px;background:#e2e2e2"></div>
<div class="vl" style="left:535px;top:353px;height:364px;background:#e2e2e2"></div>
<div class="vl" style="left:553px;top:353px;height:364px;background:#e2e2e2"></div>
<div class="vl" style="left:571px;top:353px;height:364px;background:#e2e2e2"></div>
<div class="vl" style="left:589px;top:353px;height:364px;background:#e2e2e2"></div>
<div class="vl" style="left:607px;top:353px;height:364px;background:#e2e2e2"></div>
<div class="vl" style="left:625px;top:353px;height:364px;background:#e2e2e2"></div>
<div class="vl" style="left:643px;top:353px;height:364px;background:#e2e2e2"></div>
<div class="vl" style="left:661px;top:353px;height:364px;background:#e2e2e2"></div>
<div class="vl" style="left:679px;top:353px;height:364px;background:#e2e2e2"></div>
<div class="vl" style="left:697px;top:353px;height:364px;background:#e2e2e2"></div>
<div class="vl" style="left:715px;top:353px;height:364px;background:#e2e2e2"></div>
<div class="vl" style="left:733px;top:353px;height:364px;background:#e2e2e2"></div>
<div class="vl" style="left:751px;top:353px;height:364px;background:#e2e2e2"></div>
<div class="vl" style="left:769px;top:353px;height:364px;background:#e2e2e2"></div>
<div class="vl" style="left:787px;top:353px;height:364px;background:#e2e2e2"></div>
<div class="vl" style="left:805px;top:353px;height:364px;background:#e2e2e2"></div>
<div class="vl" style="left:823px;top:353px;height:364px;background:#e2e2e2"></div>
<div class="vl" style="left:841px;top:353px;height:364px;background:#e2e2e2"></div>
<div class="vl" style="left:859px;top:353px;height:364px;background:#e2e2e2"></div>
<div class="vl" style="left:877px;top:353px;height:364px;background:#e2e2e2"></div>
<div class="vl" style="left:895px;top:353px;height:364px;background:#e2e2e2"></div>
<div class="vl" style="left:913px;top:353px;height:364px;background:#e2e2e2"></div>
<div class="vl" style="left:931px;top:353px;height:364px;background:#e2e2e2"></div>
<div class="vl" style="left:949px;top:353px;height:364px;background:#e2e2e2"></div>
<div class="vl" style="left:967px;top:353px;height:364px;background:#e2e2e2"></div>
<div class="vl" style="left:985px;top:353px;height:364px;background:#e2e2e2"></div>
<div class="vl" style="left:1003px;top:353px;height:364px;background:#e2e2e2"></div>
<div class="vl" style="left:1021px;top:353px;height:364px;background:#e2e2e2"></div>
<div class="vl" style="left:1039px;top:353px;height:364px;background:#e2e2e2"></div>
<div class="vl" style="left:1057px;top:353px;height:364px;background:#e2e2e2"></div>
<div class="vl" style="left:1074px;top:353px;height:364px;background:#e2e2e2"></div>
<div class="vl" style="left:1091px;top:353px;height:364px;background:#e2e2e2"></div>
<div class="vl" style="left:1108px;top:353px;height:364px;background:#e2e2e2"></div>
<div class="vl" style="left:1125px;top:353px;height:364px;background:#e2e2e2"></div>
<div class="vl" style="left:1142px;top:353px;height:364px;background:#e2e2e2"></div>
<div class="vl" style="left:1159px;top:353px;height:364px;background:#e2e2e2"></div>
<div class="a" style="left:553.6px;top:381.6px;width:1.4px;height:28.4px;background:#0f6cbd"></div>
<div class="w" style="left:518px;width:17px">L</div>
<div class="w" style="left:536px;width:17px">M</div>
<div class="w" style="left:554px;width:17px">M</div>
<div class="w" style="left:572px;width:17px">G</div>
<div class="w" style="left:590px;width:17px">V</div>
<div class="w" style="left:608px;width:17px">S</div>
<div class="w" style="left:626px;width:17px">D</div>
<div class="w" style="left:644px;width:17px">L</div>
<div class="w" style="left:662px;width:17px">M</div>
<div class="w" style="left:680px;width:17px">M</div>
<div class="w" style="left:698px;width:17px">G</div>
<div class="w" style="left:716px;width:17px">V</div>
<div class="w" style="left:734px;width:17px">S</div>
<div class="w" style="left:752px;width:17px">D</div>
<div class="w" style="left:770px;width:17px">L</div>
<div class="w" style="left:788px;width:17px">M</div>
<div class="w" style="left:806px;width:17px">M</div>
<div class="w" style="left:824px;width:17px">G</div>
<div class="w" style="left:842px;width:17px">V</div>
<div class="w" style="left:860px;width:17px">S</div>
<div class="w" style="left:878px;width:17px">D</div>
<div class="w" style="left:896px;width:17px">L</div>
<div class="w" style="left:914px;width:17px">M</div>
<div class="w" style="left:932px;width:17px">M</div>
<div class="w" style="left:950px;width:17px">G</div>
<div class="w" style="left:968px;width:17px">V</div>
<div class="w" style="left:986px;width:17px">S</div>
<div class="w" style="left:1004px;width:17px">D</div>
<div class="w" style="left:1022px;width:17px">L</div>
<div class="w" style="left:1040px;width:17px">M</div>
<div class="w" style="left:1058px;width:16px">M</div>
<div class="w" style="left:1075px;width:16px">G</div>
<div class="w" style="left:1092px;width:16px">V</div>
<div class="w" style="left:1109px;width:16px">S</div>
<div class="w" style="left:1126px;width:16px">D</div>
<div class="w" style="left:1143px;width:16px">L</div>
<div class="w" style="left:1160px;width:16px">M</div>
<div class="m" style="top:388.4px">gen</div>
<div class="d" style="left:556.5px;top:384.4px;color:#fff">1</div>
<div class="d" style="left:574.5px;top:384.4px">2</div>
<div class="d" style="left:592.5px;top:384.4px">3</div>
<div class="d" style="left:610.5px;top:384.4px">4</div>
<div class="d" style="left:628.5px;top:384.4px">5</div>
<div class="d" style="left:646.5px;top:384.4px">6</div>
<div class="d" style="left:664.5px;top:384.4px">7</div>
<div class="d" style="left:682.5px;top:384.4px">8</div>
<div class="d" style="left:700.5px;top:384.4px">9</div>
<div class="d" style="left:718.5px;top:384.4px">10</div>
<div class="d" style="left:736.5px;top:384.4px">11</div>
<div class="d" style="left:754.5px;top:384.4px">12</div>
<div class="d" style="left:772.5px;top:384.4px">13</div>
<div class="d" style="left:790.5px;top:384.4px">14</div>
<div class="d" style="left:808.5px;top:384.4px">15</div>
<div class="d" style="left:826.5px;top:384.4px">16</div>
<div class="d" style="left:844.5px;top:384.4px">17</div>
<div class="d" style="left:862.5px;top:384.4px">18</div>
<div class="d" style="left:880.5px;top:384.4px">19</div>
<div class="d" style="left:898.5px;top:384.4px">20</div>
<div class="d" style="left:916.5px;top:384.4px">21</div>
<div class="d" style="left:934.5px;top:384.4px">22</div>
<div class="d" style="left:952.5px;top:384.4px">23</div>
<div class="d" style="left:970.5px;top:384.4px">24</div>
<div class="d" style="left:988.5px;top:384.4px">25</div>
<div class="d" style="left:1006.5px;top:384.4px">26</div>
<div class="d" style="left:1024.5px;top:384.4px">27</div>
<div class="d" style="left:1042.5px;top:384.4px">28</div>
<div class="d" style="left:1060.5px;top:384.4px">29</div>
<div class="d" style="left:1077.5px;top:384.4px">30</div>
<div class="d" style="left:1094.5px;top:384.4px">31</div>
<div class="a" style="left:555.0px;top:396px;width:568.0px;height:5px;background:linear-gradient(90deg,rgba(70,125,176,0.88) 0px,rgba(70,125,176,0.88) 540.5px,rgba(70,125,176,0) 568.0px)"></div>
<div class="m" style="top:417.4px">feb</div>
<div class="d" style="left:610.5px;top:413.4px">1</div>
<div class="d" style="left:628.5px;top:413.4px">2</div>
<div class="d" style="left:646.5px;top:413.4px">3</div>
<div class="d" style="left:664.5px;top:413.4px">4</div>
<div class="d" style="left:682.5px;top:413.4px">5</div>
<div class="d" style="left:700.5px;top:413.4px">6</div>
<div class="d" style="left:718.5px;top:413.4px">7</div>
<div class="d" style="left:736.5px;top:413.4px">8</div>
<div class="d" style="left:754.5px;top:413.4px">9</div>
<div class="d" style="left:772.5px;top:413.4px">10</div>
<div class="d" style="left:790.5px;top:413.4px">11</div>
<div class="d" style="left:808.5px;top:413.4px">12</div>
<div class="d" style="left:826.5px;top:413.4px">13</div>
<div class="d" style="left:844.5px;top:413.4px">14</div>
<div class="d" style="left:862.5px;top:413.4px">15</div>
<div class="d" style="left:880.5px;top:413.4px">16</div>
<div class="d" style="left:898.5px;top:413.4px">17</div>
<div class="d" style="left:916.5px;top:413.4px">18</div>
<div class="d" style="left:934.5px;top:413.4px">19</div>
<div class="d" style="left:952.5px;top:413.4px">20</div>
<div class="d" style="left:970.5px;top:413.4px">21</div>
<div class="d" style="left:988.5px;top:413.4px">22</div>
<div class="d" style="left:1006.5px;top:413.4px">23</div>
<div class="d" style="left:1024.5px;top:413.4px">24</div>
<div class="d" style="left:1042.5px;top:413.4px">25</div>
<div class="d" style="left:1060.5px;top:413.4px">26</div>
<div class="d" style="left:1077.5px;top:413.4px">27</div>
<div class="d" style="left:1094.5px;top:413.4px">28</div>
<div class="a" style="left:594.0px;top:425px;width:529.0px;height:5px;background:linear-gradient(90deg,rgba(70,125,176,0) 0px,rgba(70,125,176,0.88) 27px,rgba(70,125,176,0.88) 501.5px,rgba(70,125,176,0) 529.0px)"></div>
<div class="m" style="top:446.4px">mar</div>
<div class="d" style="left:610.5px;top:442.4px">1</div>
<div class="d" style="left:628.5px;top:442.4px">2</div>
<div class="d" style="left:646.5px;top:442.4px">3</div>
<div class="d" style="left:664.5px;top:442.4px">4</div>
<div class="d" style="left:682.5px;top:442.4px">5</div>
<div class="d" style="left:700.5px;top:442.4px">6</div>
<div class="d" style="left:718.5px;top:442.4px">7</div>
<div class="d" style="left:736.5px;top:442.4px">8</div>
<div class="d" style="left:754.5px;top:442.4px">9</div>
<div class="d" style="left:772.5px;top:442.4px">10</div>
<div class="d" style="left:790.5px;top:442.4px">11</div>
<div class="d" style="left:808.5px;top:442.4px">12</div>
<div class="d" style="left:826.5px;top:442.4px">13</div>
<div class="d" style="left:844.5px;top:442.4px">14</div>
<div class="d" style="left:862.5px;top:442.4px">15</div>
<div class="d" style="left:880.5px;top:442.4px">16</div>
<div class="d" style="left:898.5px;top:442.4px">17</div>
<div class="d" style="left:916.5px;top:442.4px">18</div>
<div class="d" style="left:934.5px;top:442.4px">19</div>
<div class="d" style="left:952.5px;top:442.4px">20</div>
<div class="d" style="left:970.5px;top:442.4px">21</div>
<div class="d" style="left:988.5px;top:442.4px">22</div>
<div class="d" style="left:1006.5px;top:442.4px">23</div>
<div class="d" style="left:1024.5px;top:442.4px">24</div>
<div class="d" style="left:1042.5px;top:442.4px">25</div>
<div class="d" style="left:1060.5px;top:442.4px">26</div>
<div class="d" style="left:1077.5px;top:442.4px">27</div>
<div class="d" style="left:1094.5px;top:442.4px">28</div>
<div class="d" style="left:1111.5px;top:442.4px">29</div>
<div class="d" style="left:1128.5px;top:442.4px">30</div>
<div class="d" style="left:1145.5px;top:442.4px">31</div>
<div class="a" style="left:594.0px;top:454px;width:580.0px;height:5px;background:linear-gradient(90deg,rgba(70,125,176,0) 0px,rgba(70,125,176,0.88) 27px,rgba(70,125,176,0.88) 552.5px,rgba(70,125,176,0) 580.0px)"></div>
<div class="m" style="top:475.4px">apr</div>
<div class="d" style="left:538.5px;top:471.4px">1</div>
<div class="d" style="left:556.5px;top:471.4px">2</div>
<div class="d" style="left:574.5px;top:471.4px">3</div>
<div class="d" style="left:592.5px;top:471.4px">4</div>
<div class="d" style="left:610.5px;top:471.4px">5</div>
<div class="d" style="left:628.5px;top:471.4px">6</div>
<div class="d" style="left:646.5px;top:471.4px">7</div>
<div class="d" style="left:664.5px;top:471.4px">8</div>
<div class="d" style="left:682.5px;top:471.4px">9</div>
<div class="d" style="left:700.5px;top:471.4px">10</div>
<div class="d" style="left:718.5px;top:471.4px">11</div>
<div class="d" style="left:736.5px;top:471.4px">12</div>
<div class="d" style="left:754.5px;top:471.4px">13</div>
<div class="d" style="left:772.5px;top:471.4px">14</div>
<div class="d" style="left:790.5px;top:471.4px">15</div>
<div class="d" style="left:808.5px;top:471.4px">16</div>
<div class="d" style="left:826.5px;top:471.4px">17</div>
<div class="d" style="left:844.5px;top:471.4px">18</div>
<div class="d" style="left:862.5px;top:471.4px">19</div>
<div class="d" style="left:880.5px;top:471.4px">20</div>
<div class="d" style="left:898.5px;top:471.4px">21</div>
<div class="d" style="left:916.5px;top:471.4px">22</div>
<div class="d" style="left:934.5px;top:471.4px">23</div>
<div class="d" style="left:952.5px;top:471.4px">24</div>
<div class="d" style="left:970.5px;top:471.4px">25</div>
<div class="d" style="left:988.5px;top:471.4px">26</div>
<div class="d" style="left:1006.5px;top:471.4px">27</div>
<div class="d" style="left:1024.5px;top:471.4px">28</div>
<div class="d" style="left:1042.5px;top:471.4px">29</div>
<div class="d" style="left:1060.5px;top:471.4px">30</div>
<div class="a" style="left:522.0px;top:483px;width:567.0px;height:5px;background:linear-gradient(90deg,rgba(70,125,176,0) 0px,rgba(70,125,176,0.88) 27px,rgba(70,125,176,0.88) 539.5px,rgba(70,125,176,0) 567.0px)"></div>
<div class="m" style="top:503.4px;height:15.7px;overflow:hidden">mag</div>
<div class="d" style="left:574.5px;top:499.4px">1</div>
<div class="d" style="left:592.5px;top:499.4px">2</div>
<div class="d" style="left:610.5px;top:499.4px">3</div>
<div class="d" style="left:628.5px;top:499.4px">4</div>
<div class="d" style="left:646.5px;top:499.4px">5</div>
<div class="d" style="left:664.5px;top:499.4px">6</div>
<div class="d" style="left:682.5px;top:499.4px">7</div>
<div class="d" style="left:700.5px;top:499.4px">8</div>
<div class="d" style="left:718.5px;top:499.4px">9</div>
<div class="d" style="left:736.5px;top:499.4px">10</div>
<div class="d" style="left:754.5px;top:499.4px">11</div>
<div class="d" style="left:772.5px;top:499.4px">12</div>
<div class="d" style="left:790.5px;top:499.4px">13</div>
<div class="d" style="left:808.5px;top:499.4px">14</div>
<div class="d" style="left:826.5px;top:499.4px">15</div>
<div class="d" style="left:844.5px;top:499.4px">16</div>
<div class="d" style="left:862.5px;top:499.4px">17</div>
<div class="d" style="left:880.5px;top:499.4px">18</div>
<div class="d" style="left:898.5px;top:499.4px">19</div>
<div class="d" style="left:916.5px;top:499.4px">20</div>
<div class="d" style="left:934.5px;top:499.4px">21</div>
<div class="d" style="left:952.5px;top:499.4px">22</div>
<div class="d" style="left:970.5px;top:499.4px">23</div>
<div class="d" style="left:988.5px;top:499.4px">24</div>
<div class="d" style="left:1006.5px;top:499.4px">25</div>
<div class="d" style="left:1024.5px;top:499.4px">26</div>
<div class="d" style="left:1042.5px;top:499.4px">27</div>
<div class="d" style="left:1060.5px;top:499.4px">28</div>
<div class="d" style="left:1077.5px;top:499.4px">29</div>
<div class="d" style="left:1094.5px;top:499.4px">30</div>
<div class="d" style="left:1111.5px;top:499.4px">31</div>
<div class="a" style="left:558.0px;top:511px;width:582.0px;height:5px;background:linear-gradient(90deg,rgba(70,125,176,0) 0px,rgba(70,125,176,0.88) 27px,rgba(70,125,176,0.88) 554.5px,rgba(70,125,176,0) 582.0px)"></div>
<div class="m" style="top:531.4px;height:15.7px;overflow:hidden">giu</div>
<div class="d" style="left:628.5px;top:527.4px">1</div>
<div class="d" style="left:646.5px;top:527.4px">2</div>
<div class="d" style="left:664.5px;top:527.4px">3</div>
<div class="d" style="left:682.5px;top:527.4px">4</div>
<div class="d" style="left:700.5px;top:527.4px">5</div>
<div class="d" style="left:718.5px;top:527.4px">6</div>
<div class="d" style="left:736.5px;top:527.4px">7</div>
<div class="d" style="left:754.5px;top:527.4px">8</div>
<div class="d" style="left:772.5px;top:527.4px">9</div>
<div class="d" style="left:790.5px;top:527.4px">10</div>
<div class="d" style="left:808.5px;top:527.4px">11</div>
<div class="d" style="left:826.5px;top:527.4px">12</div>
<div class="d" style="left:844.5px;top:527.4px">13</div>
<div class="d" style="left:862.5px;top:527.4px">14</div>
<div class="d" style="left:880.5px;top:527.4px">15</div>
<div class="d" style="left:898.5px;top:527.4px">16</div>
<div class="d" style="left:916.5px;top:527.4px">17</div>
<div class="d" style="left:934.5px;top:527.4px">18</div>
<div class="d" style="left:952.5px;top:527.4px">19</div>
<div class="d" style="left:970.5px;top:527.4px">20</div>
<div class="d" style="left:988.5px;top:527.4px">21</div>
<div class="d" style="left:1006.5px;top:527.4px">22</div>
<div class="d" style="left:1024.5px;top:527.4px">23</div>
<div class="d" style="left:1042.5px;top:527.4px">24</div>
<div class="d" style="left:1060.5px;top:527.4px">25</div>
<div class="d" style="left:1077.5px;top:527.4px">26</div>
<div class="d" style="left:1094.5px;top:527.4px;color:#111;font-weight:bold">27</div>
<div class="d" style="left:1111.5px;top:527.4px">28</div>
<div class="d" style="left:1128.5px;top:527.4px">29</div>
<div class="d" style="left:1145.5px;top:527.4px">30</div>
<div class="a" style="left:612.0px;top:539px;width:562.0px;height:5px;background:linear-gradient(90deg,rgba(70,125,176,0) 0px,rgba(70,125,176,0.88) 27px,rgba(70,125,176,0.88) 534.5px,rgba(70,125,176,0) 562.0px)"></div>
<div class="m" style="top:559.4px;height:15.7px;overflow:hidden">lug</div>
<div class="d" style="left:538.5px;top:555.4px">1</div>
<div class="d" style="left:556.5px;top:555.4px">2</div>
<div class="d" style="left:574.5px;top:555.4px">3</div>
<div class="d" style="left:592.5px;top:555.4px">4</div>
<div class="d" style="left:610.5px;top:555.4px">5</div>
<div class="d" style="left:628.5px;top:555.4px">6</div>
<div class="d" style="left:646.5px;top:555.4px">7</div>
<div class="d" style="left:664.5px;top:555.4px">8</div>
<div class="d" style="left:682.5px;top:555.4px">9</div>
<div class="d" style="left:700.5px;top:555.4px">10</div>
<div class="d" style="left:718.5px;top:555.4px">11</div>
<div class="d" style="left:736.5px;top:555.4px">12</div>
<div class="d" style="left:754.5px;top:555.4px">13</div>
<div class="d" style="left:772.5px;top:555.4px">14</div>
<div class="d" style="left:790.5px;top:555.4px">15</div>
<div class="d" style="left:808.5px;top:555.4px">16</div>
<div class="d" style="left:826.5px;top:555.4px">17</div>
<div class="d" style="left:844.5px;top:555.4px">18</div>
<div class="d" style="left:862.5px;top:555.4px">19</div>
<div class="d" style="left:880.5px;top:555.4px">20</div>
<div class="d" style="left:898.5px;top:555.4px">21</div>
<div class="d" style="left:916.5px;top:555.4px">22</div>
<div class="d" style="left:934.5px;top:555.4px">23</div>
<div class="d" style="left:952.5px;top:555.4px">24</div>
<div class="d" style="left:970.5px;top:555.4px">25</div>
<div class="d" style="left:988.5px;top:555.4px">26</div>
<div class="d" style="left:1006.5px;top:555.4px">27</div>
<div class="d" style="left:1024.5px;top:555.4px">28</div>
<div class="d" style="left:1042.5px;top:555.4px">29</div>
<div class="d" style="left:1060.5px;top:555.4px">30</div>
<div class="d" style="left:1077.5px;top:555.4px">31</div>
<div class="a" style="left:522.0px;top:567px;width:584.0px;height:5px;background:linear-gradient(90deg,rgba(70,125,176,0) 0px,rgba(70,125,176,0.88) 27px,rgba(70,125,176,0.88) 556.5px,rgba(70,125,176,0) 584.0px)"></div>
<div class="m" style="top:587.4px;height:15.7px;overflow:hidden">ago</div>
<div class="d" style="left:592.5px;top:583.4px">1</div>
<div class="d" style="left:610.5px;top:583.4px">2</div>
<div class="d" style="left:628.5px;top:583.4px">3</div>
<div class="d" style="left:646.5px;top:583.4px">4</div>
<div class="d" style="left:664.5px;top:583.4px">5</div>
<div class="d" style="left:682.5px;top:583.4px">6</div>
<div class="d" style="left:700.5px;top:583.4px">7</div>
<div class="d" style="left:718.5px;top:583.4px">8</div>
<div class="d" style="left:736.5px;top:583.4px">9</div>
<div class="d" style="left:754.5px;top:583.4px">10</div>
<div class="d" style="left:772.5px;top:583.4px">11</div>
<div class="d" style="left:790.5px;top:583.4px">12</div>
<div class="d" style="left:808.5px;top:583.4px">13</div>
<div class="d" style="left:826.5px;top:583.4px">14</div>
<div class="d" style="left:844.5px;top:583.4px">15</div>
<div class="d" style="left:862.5px;top:583.4px">16</div>
<div class="d" style="left:880.5px;top:583.4px">17</div>
<div class="d" style="left:898.5px;top:583.4px">18</div>
<div class="d" style="left:916.5px;top:583.4px">19</div>
<div class="d" style="left:934.5px;top:583.4px">20</div>
<div class="d" style="left:952.5px;top:583.4px">21</div>
<div class="d" style="left:970.5px;top:583.4px">22</div>
<div class="d" style="left:988.5px;top:583.4px">23</div>
<div class="d" style="left:1006.5px;top:583.4px">24</div>
<div class="d" style="left:1024.5px;top:583.4px">25</div>
<div class="d" style="left:1042.5px;top:583.4px">26</div>
<div class="d" style="left:1060.5px;top:583.4px">27</div>
<div class="d" style="left:1077.5px;top:583.4px">28</div>
<div class="d" style="left:1094.5px;top:583.4px">29</div>
<div class="d" style="left:1111.5px;top:583.4px">30</div>
<div class="d" style="left:1128.5px;top:583.4px">31</div>
<div class="a" style="left:576.0px;top:595px;width:581.0px;height:5px;background:linear-gradient(90deg,rgba(70,125,176,0) 0px,rgba(70,125,176,0.88) 27px,rgba(70,125,176,0.88) 553.5px,rgba(70,125,176,0) 581.0px)"></div>
<div class="m" style="top:615.4px">set</div>
<div class="d" style="left:520.5px;top:611.4px">1</div>
<div class="d" style="left:538.5px;top:611.4px">2</div>
<div class="d" style="left:556.5px;top:611.4px">3</div>
<div class="d" style="left:574.5px;top:611.4px">4</div>
<div class="d" style="left:592.5px;top:611.4px">5</div>
<div class="d" style="left:610.5px;top:611.4px">6</div>
<div class="d" style="left:628.5px;top:611.4px">7</div>
<div class="d" style="left:646.5px;top:611.4px">8</div>
<div class="d" style="left:664.5px;top:611.4px">9</div>
<div class="d" style="left:682.5px;top:611.4px">10</div>
<div class="d" style="left:700.5px;top:611.4px">11</div>
<div class="d" style="left:718.5px;top:611.4px">12</div>
<div class="d" style="left:736.5px;top:611.4px">13</div>
<div class="d" style="left:754.5px;top:611.4px">14</div>
<div class="d" style="left:772.5px;top:611.4px">15</div>
<div class="d" style="left:790.5px;top:611.4px">16</div>
<div class="d" style="left:808.5px;top:611.4px">17</div>
<div class="d" style="left:826.5px;top:611.4px">18</div>
<div class="d" style="left:844.5px;top:611.4px">19</div>
<div class="d" style="left:862.5px;top:611.4px">20</div>
<div class="d" style="left:880.5px;top:611.4px">21</div>
<div class="d" style="left:898.5px;top:611.4px">22</div>
<div class="d" style="left:916.5px;top:611.4px">23</div>
<div class="d" style="left:934.5px;top:611.4px">24</div>
<div class="d" style="left:952.5px;top:611.4px">25</div>
<div class="d" style="left:970.5px;top:611.4px">26</div>
<div class="d" style="left:988.5px;top:611.4px">27</div>
<div class="d" style="left:1006.5px;top:611.4px">28</div>
<div class="d" style="left:1024.5px;top:611.4px">29</div>
<div class="d" style="left:1042.5px;top:611.4px">30</div>
<div class="a" style="left:521.5px;top:623px;width:550.5px;height:5px;background:linear-gradient(90deg,rgba(70,125,176,0) 0px,rgba(70,125,176,0.88) 27px,rgba(70,125,176,0.88) 523.0px,rgba(70,125,176,0) 550.5px)"></div>
<div class="m" style="top:643.4px">ott</div>
<div class="d" style="left:556.5px;top:639.4px">1</div>
<div class="d" style="left:574.5px;top:639.4px">2</div>
<div class="d" style="left:592.5px;top:639.4px">3</div>
<div class="d" style="left:610.5px;top:639.4px">4</div>
<div class="d" style="left:628.5px;top:639.4px">5</div>
<div class="d" style="left:646.5px;top:639.4px">6</div>
<div class="d" style="left:664.5px;top:639.4px">7</div>
<div class="d" style="left:682.5px;top:639.4px">8</div>
<div class="d" style="left:700.5px;top:639.4px">9</div>
<div class="d" style="left:718.5px;top:639.4px">10</div>
<div class="d" style="left:736.5px;top:639.4px">11</div>
<div class="d" style="left:754.5px;top:639.4px">12</div>
<div class="d" style="left:772.5px;top:639.4px">13</div>
<div class="d" style="left:790.5px;top:639.4px">14</div>
<div class="d" style="left:808.5px;top:639.4px">15</div>
<div class="d" style="left:826.5px;top:639.4px">16</div>
<div class="d" style="left:844.5px;top:639.4px">17</div>
<div class="d" style="left:862.5px;top:639.4px">18</div>
<div class="d" style="left:880.5px;top:639.4px">19</div>
<div class="d" style="left:898.5px;top:639.4px">20</div>
<div class="d" style="left:916.5px;top:639.4px">21</div>
<div class="d" style="left:934.5px;top:639.4px">22</div>
<div class="d" style="left:952.5px;top:639.4px">23</div>
<div class="d" style="left:970.5px;top:639.4px">24</div>
<div class="d" style="left:988.5px;top:639.4px">25</div>
<div class="d" style="left:1006.5px;top:639.4px">26</div>
<div class="d" style="left:1024.5px;top:639.4px">27</div>
<div class="d" style="left:1042.5px;top:639.4px">28</div>
<div class="d" style="left:1060.5px;top:639.4px">29</div>
<div class="d" style="left:1077.5px;top:639.4px">30</div>
<div class="d" style="left:1094.5px;top:639.4px">31</div>
<div class="a" style="left:540.0px;top:651px;width:583.0px;height:5px;background:linear-gradient(90deg,rgba(70,125,176,0) 0px,rgba(70,125,176,0.88) 27px,rgba(70,125,176,0.88) 555.5px,rgba(70,125,176,0) 583.0px)"></div>
<div class="m" style="top:671.4px">nov</div>
<div class="d" style="left:610.5px;top:667.4px">1</div>
<div class="d" style="left:628.5px;top:667.4px">2</div>
<div class="d" style="left:646.5px;top:667.4px">3</div>
<div class="d" style="left:664.5px;top:667.4px">4</div>
<div class="d" style="left:682.5px;top:667.4px">5</div>
<div class="d" style="left:700.5px;top:667.4px">6</div>
<div class="d" style="left:718.5px;top:667.4px">7</div>
<div class="d" style="left:736.5px;top:667.4px">8</div>
<div class="d" style="left:754.5px;top:667.4px">9</div>
<div class="d" style="left:772.5px;top:667.4px">10</div>
<div class="d" style="left:790.5px;top:667.4px">11</div>
<div class="d" style="left:808.5px;top:667.4px">12</div>
<div class="d" style="left:826.5px;top:667.4px">13</div>
<div class="d" style="left:844.5px;top:667.4px">14</div>
<div class="d" style="left:862.5px;top:667.4px">15</div>
<div class="d" style="left:880.5px;top:667.4px">16</div>
<div class="d" style="left:898.5px;top:667.4px">17</div>
<div class="d" style="left:916.5px;top:667.4px">18</div>
<div class="d" style="left:934.5px;top:667.4px">19</div>
<div class="d" style="left:952.5px;top:667.4px">20</div>
<div class="d" style="left:970.5px;top:667.4px">21</div>
<div class="d" style="left:988.5px;top:667.4px">22</div>
<div class="d" style="left:1006.5px;top:667.4px">23</div>
<div class="d" style="left:1024.5px;top:667.4px">24</div>
<div class="d" style="left:1042.5px;top:667.4px">25</div>
<div class="d" style="left:1060.5px;top:667.4px">26</div>
<div class="d" style="left:1077.5px;top:667.4px">27</div>
<div class="d" style="left:1094.5px;top:667.4px">28</div>
<div class="d" style="left:1111.5px;top:667.4px">29</div>
<div class="d" style="left:1128.5px;top:667.4px">30</div>
<div class="a" style="left:594.0px;top:679px;width:563.0px;height:5px;background:linear-gradient(90deg,rgba(70,125,176,0) 0px,rgba(70,125,176,0.88) 27px,rgba(70,125,176,0.88) 535.5px,rgba(70,125,176,0) 563.0px)"></div>
<div class="m" style="top:699.4px">dic</div>
<div class="d" style="left:520.5px;top:695.4px">1</div>
<div class="d" style="left:538.5px;top:695.4px">2</div>
<div class="d" style="left:556.5px;top:695.4px">3</div>
<div class="d" style="left:574.5px;top:695.4px">4</div>
<div class="d" style="left:592.5px;top:695.4px">5</div>
<div class="d" style="left:610.5px;top:695.4px">6</div>
<div class="d" style="left:628.5px;top:695.4px">7</div>
<div class="d" style="left:646.5px;top:695.4px">8</div>
<div class="d" style="left:664.5px;top:695.4px">9</div>
<div class="d" style="left:682.5px;top:695.4px">10</div>
<div class="d" style="left:700.5px;top:695.4px">11</div>
<div class="d" style="left:718.5px;top:695.4px">12</div>
<div class="d" style="left:736.5px;top:695.4px">13</div>
<div class="d" style="left:754.5px;top:695.4px">14</div>
<div class="d" style="left:772.5px;top:695.4px">15</div>
<div class="d" style="left:790.5px;top:695.4px">16</div>
<div class="d" style="left:808.5px;top:695.4px">17</div>
<div class="d" style="left:826.5px;top:695.4px">18</div>
<div class="d" style="left:844.5px;top:695.4px">19</div>
<div class="d" style="left:862.5px;top:695.4px">20</div>
<div class="d" style="left:880.5px;top:695.4px">21</div>
<div class="d" style="left:898.5px;top:695.4px">22</div>
<div class="d" style="left:916.5px;top:695.4px">23</div>
<div class="d" style="left:934.5px;top:695.4px">24</div>
<div class="d" style="left:952.5px;top:695.4px">25</div>
<div class="d" style="left:970.5px;top:695.4px">26</div>
<div class="d" style="left:988.5px;top:695.4px">27</div>
<div class="d" style="left:1006.5px;top:695.4px">28</div>
<div class="d" style="left:1024.5px;top:695.4px">29</div>
<div class="d" style="left:1042.5px;top:695.4px">30</div>
<div class="d" style="left:1060.5px;top:695.4px">31</div>
<div class="a" style="left:521.5px;top:707px;width:551.0px;height:5px;background:linear-gradient(90deg,rgba(70,125,176,0) 0px,rgba(70,125,176,0.88) 27px,rgba(70,125,176,0.88) 551.0px)"></div>
</body></html>
